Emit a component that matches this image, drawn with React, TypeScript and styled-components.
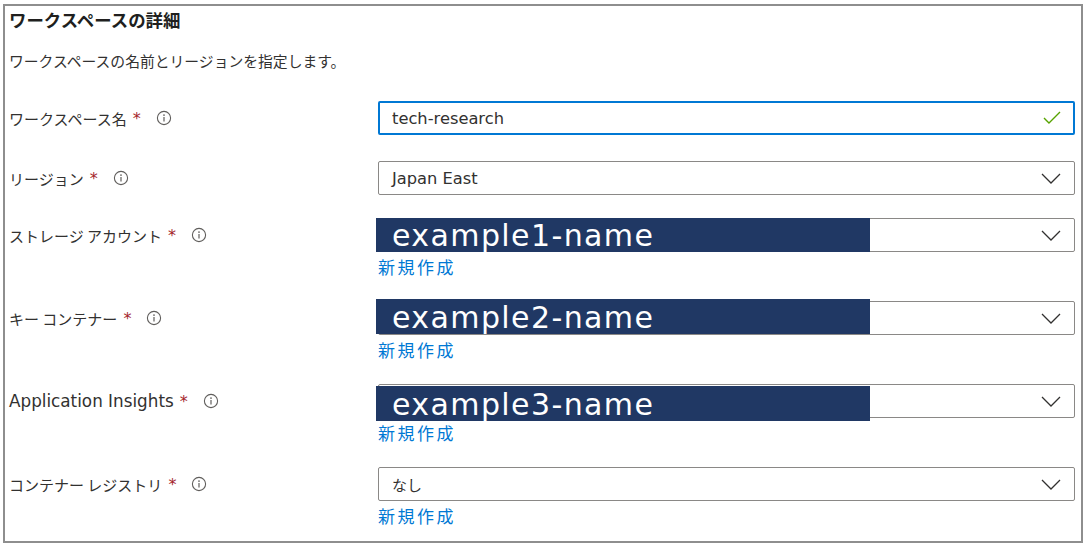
import React from "react";
import styled, { createGlobalStyle } from "styled-components";

const GlobalStyle = createGlobalStyle`
  html, body { margin: 0; padding: 0; background: #ffffff; }
  body { font-family: "Noto Sans CJK JP", "Noto Sans", sans-serif; color: #323130; }
  * { box-sizing: border-box; }
`;

const Frame = styled.section`
  margin: 4px 0 0 3px;
  width: 1080px;
  height: 539px;
  border: 2px solid #8e8e8e;
  padding: 0 6px 0 4px;
  background: #fff;
`;

const Title = styled.h2`
  margin: 0;
  height: 28px;
  line-height: 28px;
  font-size: 17.4px;
  font-weight: 700;
  color: #201f1e;
`;

const Description = styled.p`
  margin: 15px 0 0;
  line-height: 24px;
  font-size: 14.8px;
  color: #323130;
`;

const Form = styled.div`
  margin-top: 28px;
  display: flex;
  flex-direction: column;
`;

const Field = styled.div<{ $after: number }>`
  display: grid;
  grid-template-columns: 369px 1fr;
  padding-bottom: ${(p) => p.$after}px;
`;

const LabelCell = styled.div`
  height: 34px;
  display: flex;
  align-items: center;
`;

const LabelText = styled.span<{ $latin?: boolean }>`
  font-family: ${(p) =>
    p.$latin ? `"DejaVu Sans", "Noto Sans CJK JP", sans-serif` : `"Noto Sans CJK JP", sans-serif`};
  font-size: ${(p) => (p.$latin ? "16.8px" : "15px")};
  color: #323130;
  white-space: pre;
`;

const Required = styled.span`
  color: #a4262c;
  font-family: "DejaVu Sans", sans-serif;
  font-size: 16px;
  margin-left: 6px;
  margin-right: 15px;
`;

const InfoIcon = () => (
  <svg width="16" height="16" viewBox="0 0 16 16" aria-hidden>
    <circle cx="8" cy="8" r="6.6" fill="none" stroke="#605e5c" strokeWidth="1.1" />
    <circle cx="8" cy="5.1" r="0.85" fill="#605e5c" />
    <line x1="8" y1="7" x2="8" y2="11.4" stroke="#605e5c" strokeWidth="1.2" />
  </svg>
);

const ControlCell = styled.div`
  display: flex;
  flex-direction: column;
`;

const Box = styled.div<{ $focused?: boolean }>`
  position: relative;
  height: 34px;
  display: flex;
  align-items: center;
  justify-content: space-between;
  border-radius: 2px;
  border: ${(p) => (p.$focused ? "2px solid #0078d4" : "1px solid #8a8886")};
  padding: ${(p) => (p.$focused ? "0 12px 0 12px" : "0 13px 0 13px")};
  background: #fff;
`;

const Value = styled.span<{ $latin?: boolean }>`
  font-family: ${(p) =>
    p.$latin ? `"DejaVu Sans", "Noto Sans CJK JP", sans-serif` : `"Noto Sans CJK JP", sans-serif`};
  font-size: ${(p) => (p.$latin ? "16.3px" : "15px")};
  color: #323130;
`;

const Redaction = styled.div<{ $top: number; $height: number }>`
  position: absolute;
  left: -3px;
  top: ${(p) => p.$top}px;
  width: 494px;
  height: ${(p) => p.$height}px;
  background: #203864;
  color: #ffffff;
  font-family: "DejaVu Sans", sans-serif;
  font-size: 30px;
  letter-spacing: 1.4px;
  line-height: ${(p) => p.$height + 2}px;
  padding-left: 16px;
  white-space: nowrap;
`;

const CreateLink = styled.a`
  display: block;
  height: 29px;
  line-height: 29px;
  font-size: 17px;
  letter-spacing: 2.5px;
  color: #0078d4;
  text-decoration: none;
  cursor: pointer;
  font-family: "Noto Sans CJK JP", sans-serif;
`;

const Chevron = () => (
  <svg width="20" height="11" viewBox="0 0 20 11" aria-hidden>
    <polyline points="1,1 10,10 19,1" fill="none" stroke="#323130" strokeWidth="1.3" />
  </svg>
);

const Check = () => (
  <svg width="18" height="14" viewBox="0 0 18 14" aria-hidden>
    <polyline points="1,7 6,12 17,1" fill="none" stroke="#57a300" strokeWidth="1.4" />
  </svg>
);

type FieldDef = {
  label: string;
  latinLabel?: boolean;
  value?: string;
  latinValue?: boolean;
  focused?: boolean;
  redacted?: string;
  redTop?: number;
  redHeight?: number;
  link?: boolean;
  after: number;
};

const fields: FieldDef[] = [
  { label: "ワークスペース名", value: "tech-research", latinValue: true, focused: true, after: 26 },
  { label: "リージョン", value: "Japan East", latinValue: true, after: 23 },
  { label: "ストレージ アカウント", redacted: "example1-name", redTop: 0, redHeight: 34, link: true, after: 20 },
  { label: "キー コンテナー", redacted: "example2-name", redTop: -2, redHeight: 35, link: true, after: 20 },
  { label: "Application Insights", latinLabel: true, redacted: "example3-name", redTop: 2, redHeight: 35, link: true, after: 20 },
  { label: "コンテナー レジストリ", value: "なし", link: true, after: 0 },
];

export default function App() {
  return (
    <>
      <GlobalStyle />
      <Frame>
        <Title>ワークスペースの詳細</Title>
        <Description>ワークスペースの名前とリージョンを指定します。</Description>
        <Form>
          {fields.map((f) => (
            <Field key={f.label} $after={f.after}>
              <LabelCell>
                <LabelText $latin={f.latinLabel}>{f.label}</LabelText>
                <Required>*</Required>
                <InfoIcon />
              </LabelCell>
              <ControlCell>
                <Box $focused={f.focused}>
                  <Value $latin={f.latinValue}>{f.value ?? ""}</Value>
                  {f.focused ? <Check /> : <Chevron />}
                  {f.redacted && (
                    <Redaction $top={(f.redTop ?? 0) - 1} $height={f.redHeight ?? 34}>
                      {f.redacted}
                    </Redaction>
                  )}
                </Box>
                {f.link && <CreateLink>新規作成</CreateLink>}
              </ControlCell>
            </Field>
          ))}
        </Form>
      </Frame>
    </>
  );
}
